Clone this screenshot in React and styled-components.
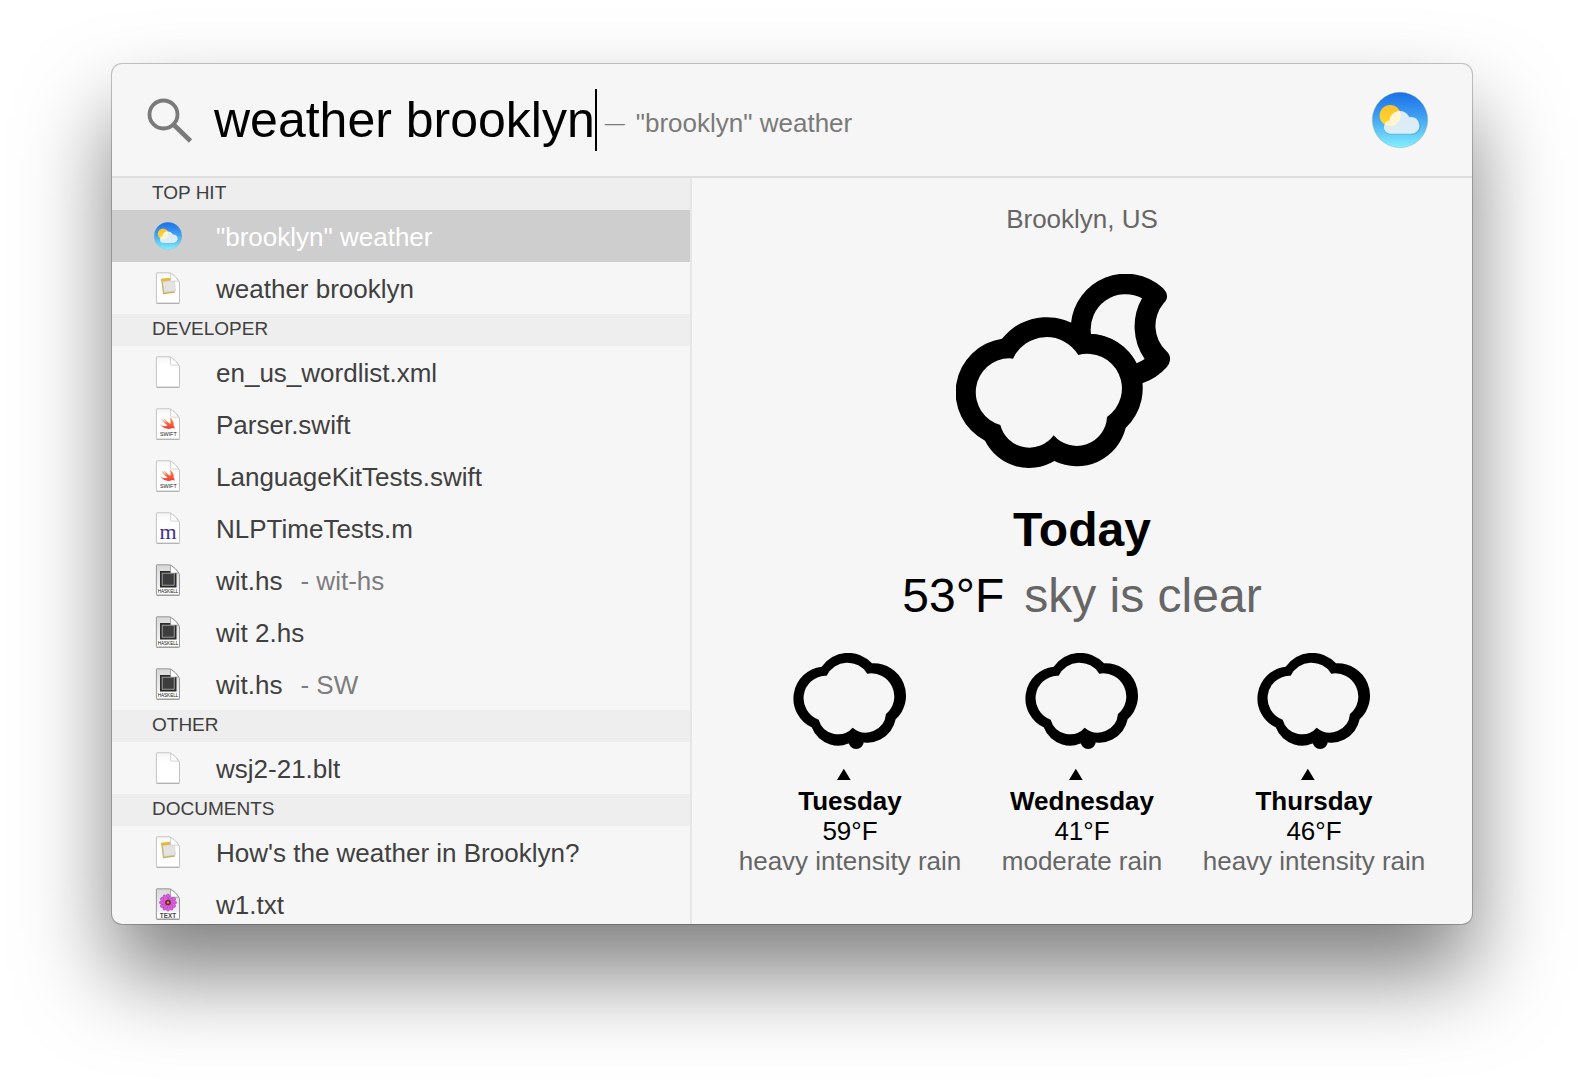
import React, { useState } from "react";
import styled, { createGlobalStyle } from "styled-components";

const GlobalStyle = createGlobalStyle`
  *, *::before, *::after { box-sizing: border-box; }
  body {
    margin: 0;
    background: #fff;
    font-family: "Liberation Sans", Arial, sans-serif;
  }
  h1, h2, h3, p, ul { margin: 0; padding: 0; }
`;

const Desktop = styled.main`
  display: flex;
  height: 100vh;
  padding: 64px 112px 160px;
  overflow: hidden;
`;

const Panel = styled.section`
  flex: 1;
  min-width: 0;
  display: flex;
  flex-direction: column;
  overflow: hidden;
  border-radius: 10px;
  background: #f6f6f6;
  box-shadow: 0 0 0 1px rgba(0, 0, 0, 0.22), 0 50px 88px rgba(0, 0, 0, 0.5);
`;

const SearchBar = styled.header`
  flex: none;
  display: flex;
  align-items: center;
  height: 114px;
  padding: 0 44px 0 35px;
  border-bottom: 2px solid #dedede;
`;

const SearchLabel = styled.label`
  flex: none;
  display: flex;
  margin-right: 21px;
`;

const SearchInput = styled.input`
  field-sizing: content;
  height: 62px;
  padding: 0;
  border: 0;
  outline: 0;
  background: transparent;
  color: #000;
  font: 50px/62px "Liberation Sans", Arial, sans-serif;
`;

const Caret = styled.span`
  flex: none;
  width: 2px;
  height: 62px;
  background: #000;
`;

const Completion = styled.span`
  flex: 1;
  display: flex;
  align-items: center;
  gap: 11px;
  padding: 6px 0 0 8px;
  color: #7a7a7a;
  font-size: 26px;
  line-height: 30px;
  white-space: nowrap;
`;

const Dash = styled.span`
  font-size: 20px;
`;

const Body = styled.div`
  flex: 1;
  min-height: 0;
  display: grid;
  grid-template-columns: 29fr 39fr;
`;

const Results = styled.nav`
  min-height: 0;
  overflow-y: auto;
  scrollbar-width: none;
  border-right: 2px solid #e6e6e6;
`;

const GroupTitle = styled.h2`
  height: 32px;
  padding-left: 40px;
  background: #eeeeee;
  color: #404040;
  font-size: 19px;
  font-weight: 400;
  line-height: 30px;
`;

const GroupList = styled.ul`
  list-style: none;
`;

const ResultButton = styled.button`
  display: flex;
  align-items: center;
  width: 100%;
  height: 52px;
  padding: 0 0 0 40px;
  border: 0;
  background: ${(p) => (p.$selected ? "#cecece" : "transparent")};
  color: ${(p) => (p.$selected ? "#ffffff" : "#404040")};
  font: 26px/30px "Liberation Sans", Arial, sans-serif;
  text-align: left;
  white-space: nowrap;

  svg { flex: none; margin-right: 32px; }
`;

const ResultName = styled.span`
  padding-top: 2px;
`;

const ResultNote = styled.span`
  margin-left: 18px;
  padding-top: 2px;
  color: #7d7d7d;
`;

const Preview = styled.article`
  display: flex;
  flex-direction: column;
  align-items: center;
  padding: 26px 40px 0;
  color: #000;
  text-align: center;
`;

const City = styled.p`
  margin-bottom: 40px;
  color: #666;
  font-size: 26px;
  line-height: 30px;
`;

const Today = styled.h1`
  margin-top: 29px;
  font-size: 48px;
  line-height: 66px;
`;

const Current = styled.p`
  display: flex;
  gap: 20px;
  margin-bottom: 24px;
  font-size: 48px;
  line-height: 66px;
`;

const Muted = styled.span`
  color: #666;
`;

const Forecast = styled.div`
  display: grid;
  grid-template-columns: repeat(3, 232px);
  justify-content: center;
`;

const Day = styled.section`
  display: flex;
  flex-direction: column;
  align-items: center;
  font-size: 26px;
  line-height: 30px;
  white-space: nowrap;
`;

const DayName = styled.h3`
  margin-top: 6px;
  font-size: 26px;
  line-height: 30px;
`;

function SearchIcon() {
  return (
    <svg width="46" height="46" viewBox="0 0 46 46" fill="none" stroke="#7a7a7a" aria-hidden="true">
      <circle cx="16.500" cy="17.500" r="14" strokeWidth="3.8" />
      <path d="M26.500 27.500L43.500 44" strokeWidth="4.6" />
    </svg>
  );
}

function WeatherIcon({ size, box, id }) {
  const pad = ((box - size) / 2) * (56 / size);
  const span = 56 + pad * 2;
  return (
    <svg width={box} height={box} viewBox={`${-pad} ${-pad} ${span} ${span}`} aria-hidden="true">
      <defs>
        <linearGradient id={`${id}-sky`} x1="0" y1="0" x2="0" y2="1">
          <stop offset="0" stopColor="#1a6fe8" />
          <stop offset="0.4" stopColor="#3c9bf0" />
          <stop offset="1" stopColor="#84f0fc" />
        </linearGradient>
        <linearGradient id={`${id}-sun`} x1="0" y1="0" x2="0" y2="1">
          <stop offset="0" stopColor="#fdc02f" />
          <stop offset="1" stopColor="#ffdc2a" />
        </linearGradient>
        <clipPath id={`${id}-disc`}>
          <circle cx="18.2" cy="23.6" r="10.6" />
        </clipPath>
      </defs>
      <circle cx="28" cy="28" r="27.7" fill={`url(#${id}-sky)`} stroke="#7d9fb8" strokeOpacity="0.6" strokeWidth="0.6" />
      <circle cx="18.2" cy="23.6" r="10.6" fill={`url(#${id}-sun)`} />
      <path
        d="M18.500 42.600A6.600 6.600 0 0 1 17.300 29.500A10.600 10.600 0 0 1 37.500 26A8.600 8.600 0 1 1 38.300 42.600Z"
        fill="#2a7fb0"
        fillOpacity="0.3"
      />
      <path
        d="M18.500 41.800A6.600 6.600 0 0 1 17.300 28.700A10.600 10.600 0 0 1 37.500 25.200A8.400 8.400 0 1 1 38.300 41.800Z"
        fill="#e4f0f7"
        fillOpacity="0.95"
      />
      <path
        d="M18.500 41.800A6.600 6.600 0 0 1 17.300 28.700A10.600 10.600 0 0 1 37.500 25.200A8.400 8.400 0 1 1 38.300 41.800Z"
        fill="#fff6cf"
        clipPath={`url(#${id}-disc)`}
      />
    </svg>
  );
}

function FileIcon({ kind, id }) {
  const dark = kind === "haskell" || kind === "text";
  return (
    <svg width="32" height="32" viewBox="0 0 32 32" aria-hidden="true">
      <defs>
        <linearGradient id={`${id}-page`} x1="0" y1="0" x2="0" y2="1">
          <stop offset="0" stopColor={dark ? "#d8d8d8" : "#f6f6f6"} />
          <stop offset={dark ? "0.75" : "0.3"} stopColor={dark ? "#f2f2f2" : "#fff"} />
          <stop offset={dark ? "0.76" : "0.31"} stopColor="#fff" />
        </linearGradient>
        <linearGradient id={`${id}-bird`} x1="0" y1="0" x2="0" y2="1">
          <stop offset="0" stopColor="#f9913c" />
          <stop offset="1" stopColor="#f5393a" />
        </linearGradient>
      </defs>
      <path d="M4.500 31.500H27.500" stroke="#000" strokeOpacity="0.3" />
      <path
        d="M5 .8H17C20 1 27 7.500 27.500 11V30.400a.6.6 0 0 1-.6.6H5a.6.6 0 0 1-.6-.6V1.400A.6.6 0 0 1 5 .8Z"
        fill={`url(#${id}-page)`}
        stroke={dark ? "#8c8c8c" : "#bdbdbd"}
        strokeWidth="0.9"
      />
      {kind === "note" && (
        <g transform="rotate(-7 16 14)">
          <rect x="10" y="6.500" width="12" height="15" fill="#c9b05c" />
          <rect x="10" y="6" width="9.500" height="2.800" fill="#e8b92e" />
          <rect x="11.300" y="9" width="11.600" height="11" fill="#e3e3e3" stroke="#cfcabb" strokeWidth="0.5" />
        </g>
      )}
      {kind === "swift" && (
        <>
          <path
            d="M17.600 9.400c3.300 2.200 4.700 5.500 4 8.200 1.300 1.600 1 3.200.8 3.500-.8-1.500-2-1.300-2.700-.9-3.700 1.900-8.600.3-11.300-3.600 2.500 1.700 5.200 2.100 7.200 1-2.700-2.100-4.800-4.700-6.200-6.800 2 1.800 4 3.300 5.500 4.200-1.300-1.500-2.700-3.200-3.500-4.700 2.100 2.100 4.700 4.300 6.800 5.500.8-1.700.5-4.200-.6-6.400Z"
            fill={`url(#${id}-bird)`}
          />
          <text x="16.300" y="28.200" textAnchor="middle" fontSize="5.400" fill="#222" fontFamily="Liberation Sans">SWIFT</text>
        </>
      )}
      {kind === "objc" && (
        <text x="16" y="26.500" textAnchor="middle" fontSize="22" fill="#472d8a" fontFamily="Liberation Serif">m</text>
      )}
      {kind === "haskell" && (
        <>
          <rect x="8" y="7" width="16.500" height="16.500" fill="#2b2b2b" />
          <rect x="10.200" y="9.200" width="12" height="12" fill="#3d3d3d" stroke="#b4b4b4" strokeWidth="0.8" />
          <text x="16" y="28.600" textAnchor="middle" fontSize="4.600" fill="#111" fontFamily="Liberation Sans">HASKELL</text>
        </>
      )}
      {kind === "text" && (
        <>
          <g fill="#dd5fe0" stroke="#9a2fa5" strokeWidth="0.400">
            {[0, 30, 60, 90, 120, 150, 180, 210, 240, 270, 300, 330].map((a) => (
              <ellipse key={a} cx="16" cy="9.800" rx="2" ry="4" transform={`rotate(${a} 16 14.500)`} />
            ))}
          </g>
          <circle cx="16" cy="14.500" r="2.800" fill="#6b2a1e" />
          <circle cx="16" cy="14.500" r="1.200" fill="#e08a3a" />
          <text x="16" y="29.500" textAnchor="middle" fontSize="6.400" fontWeight="700" fill="#444" fontFamily="Liberation Sans">TEXT</text>
        </>
      )}
      <path
        d="M18.500 1.200V8.300a.8.8 0 0 0 .8.8H26.800Q24 4.500 18.500 1.200Z"
        fill="#fff"
        stroke={dark ? "#8c8c8c" : "#c4c4c4"}
        strokeWidth="0.700"
      />
    </svg>
  );
}

function CloudMoon() {
  return (
    <svg width="252" height="194" viewBox="48 42 756 582" fillRule="evenodd" role="img" aria-label="Clear night with clouds">
      <path
        d="M186 236A171 171 0 0 1 440 221A164 164 0 0 1 557 504A151 151 0 0 1 343 603A148 148 0 0 1 135 542A163 163 0 0 1 186 236Z
           M219 296A111 111 0 0 1 415 285A104 104 0 0 1 501 471A91 91 0 0 1 341 526A90 90 0 0 1 181 495A102 102 0 0 1 208 295Z"
      />
      <path
        d="M393 190A165 165 0 0 1 666 82Q685 99 680 116Q678 123 671 130A104 104 0 0 0 679 273Q692 285 690 301Q689 311 680 322A170 170 0 0 1 607 370L590 340L430 240Z
           M453 222A105 105 0 0 1 606 115A172 172 0 0 0 614 297Q603 304 590 310A164 164 0 0 0 453 222Z"
      />
    </svg>
  );
}

function CloudRain() {
  return (
    <svg width="116" height="127" viewBox="36 39 348 381" fillRule="evenodd" role="img" aria-label="Rain">
      <path
        d="M125 80A97 97 0 0 1 276 70A97 97 0 0 1 347 238A88 88 0 0 1 225 301A86 86 0 0 1 95 262A96 96 0 0 1 125 80Z
           M140 107A70 70 0 0 1 262 101A69 69 0 0 1 318 222A61 61 0 0 1 218 263A60 60 0 0 1 116 239A68 68 0 0 1 135 107Z"
      />
      <circle cx="228.500" cy="304" r="23" />
      <path d="M191.500 386L212 420H171Z" />
    </svg>
  );
}

const groups = [
  {
    title: "TOP HIT",
    items: [
      { name: '"brooklyn" weather', kind: "weather" },
      { name: "weather brooklyn", kind: "note" },
    ],
  },
  {
    title: "DEVELOPER",
    items: [
      { name: "en_us_wordlist.xml", kind: "blank" },
      { name: "Parser.swift", kind: "swift" },
      { name: "LanguageKitTests.swift", kind: "swift" },
      { name: "NLPTimeTests.m", kind: "objc" },
      { name: "wit.hs", note: "- wit-hs", kind: "haskell" },
      { name: "wit 2.hs", kind: "haskell" },
      { name: "wit.hs", note: "- SW", kind: "haskell" },
    ],
  },
  { title: "OTHER", items: [{ name: "wsj2-21.blt", kind: "blank" }] },
  {
    title: "DOCUMENTS",
    items: [
      { name: "How's the weather in Brooklyn?", kind: "note" },
      { name: "w1.txt", kind: "text" },
    ],
  },
];

const days = [
  { name: "Tuesday", temp: "59°F", sky: "heavy intensity rain" },
  { name: "Wednesday", temp: "41°F", sky: "moderate rain" },
  { name: "Thursday", temp: "46°F", sky: "heavy intensity rain" },
];

export default function App() {
  const [query, setQuery] = useState("weather brooklyn");
  const [selected, setSelected] = useState("0-0");

  return (
    <>
      <GlobalStyle />
      <Desktop>
        <Panel>
          <SearchBar>
            <SearchLabel htmlFor="query" aria-label="Search">
              <SearchIcon />
            </SearchLabel>
            <SearchInput
              id="query"
              type="text"
              spellCheck={false}
              autoComplete="off"
              value={query}
              onChange={(e) => setQuery(e.target.value)}
            />
            <Caret />
            <Completion>
              <Dash>—</Dash>
              <span>"brooklyn" weather</span>
            </Completion>
            <WeatherIcon size={56} box={56} id="app" />
          </SearchBar>
          <Body>
            <Results aria-label="Results">
              {groups.map((group, g) => (
                <section key={group.title}>
                  <GroupTitle>{group.title}</GroupTitle>
                  <GroupList>
                    {group.items.map((item, i) => {
                      const id = `${g}-${i}`;
                      return (
                        <li key={id}>
                          <ResultButton type="button" $selected={selected === id} onClick={() => setSelected(id)}>
                            {item.kind === "weather" ? (
                              <WeatherIcon size={28} box={32} id={`r${id}`} />
                            ) : (
                              <FileIcon kind={item.kind} id={`r${id}`} />
                            )}
                            <ResultName>{item.name}</ResultName>
                            {item.note && <ResultNote>{item.note}</ResultNote>}
                          </ResultButton>
                        </li>
                      );
                    })}
                  </GroupList>
                </section>
              ))}
            </Results>
            <Preview>
              <City>Brooklyn, US</City>
              <CloudMoon />
              <Today>Today</Today>
              <Current>
                <span>53°F</span>
                <Muted>sky is clear</Muted>
              </Current>
              <Forecast>
                {days.map((day) => (
                  <Day key={day.name}>
                    <CloudRain />
                    <DayName>{day.name}</DayName>
                    <p>{day.temp}</p>
                    <Muted as="p">{day.sky}</Muted>
                  </Day>
                ))}
              </Forecast>
            </Preview>
          </Body>
        </Panel>
      </Desktop>
    </>
  );
}
